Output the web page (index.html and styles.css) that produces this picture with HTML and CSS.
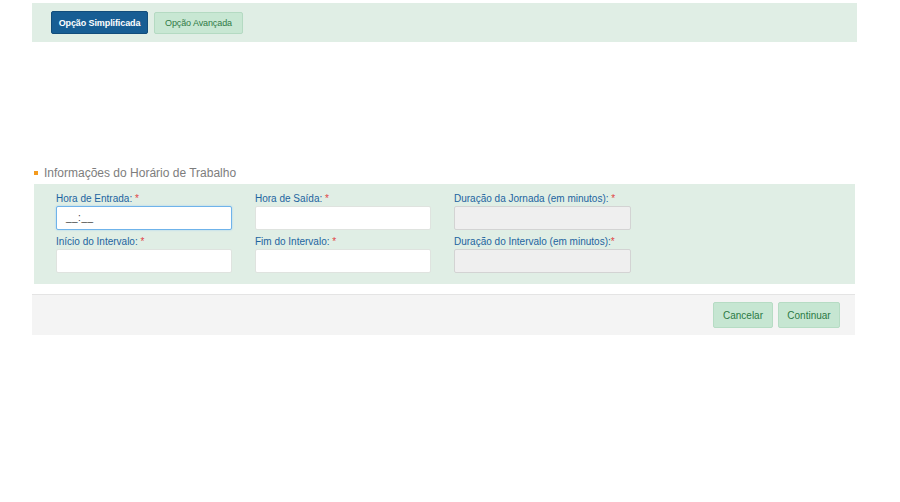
FILE: index.html
```html
<!DOCTYPE html>
<html lang="pt">
<head>
<meta charset="utf-8">
<link rel="stylesheet" href="styles.css">
</head>
<body>
<div class="page">
  <div class="tabs">
    <button class="tab tab-active">Opção Simplificada</button>
    <button class="tab tab-alt">Opção Avançada</button>
  </div>

  <div class="section-title"><span class="bullet"></span>Informações do Horário de Trabalho</div>

  <div class="panel">
    <div class="grid">
      <div class="field">
        <label>Hora de Entrada: <span class="req">*</span></label>
        <div class="input focused"><span class="mask">__:__</span></div>
      </div>
      <div class="field">
        <label>Hora de Saída: <span class="req">*</span></label>
        <div class="input"></div>
      </div>
      <div class="field">
        <label>Duração da Jornada (em minutos): <span class="req">*</span></label>
        <div class="input disabled"></div>
      </div>
      <div class="field">
        <label>Início do Intervalo: <span class="req">*</span></label>
        <div class="input"></div>
      </div>
      <div class="field">
        <label>Fim do Intervalo: <span class="req">*</span></label>
        <div class="input"></div>
      </div>
      <div class="field">
        <label>Duração do Intervalo (em minutos):<span class="req">*</span></label>
        <div class="input disabled"></div>
      </div>
    </div>
  </div>

  <div class="footer">
    <button class="btn btn-cancel">Cancelar</button>
    <button class="btn btn-continue">Continuar</button>
  </div>
</div>
</body>
</html>
```

FILE: styles.css
```css
* { box-sizing: border-box; }
html, body { margin: 0; padding: 0; background: #fff; }
body { font-family: "Liberation Sans", Arial, sans-serif; }

.page {
  width: 825px;
  margin-left: 32px;
  padding-top: 3px;
}

.tabs {
  background: #e0eee5;
  height: 39px;
  display: flex;
  align-items: center;
  gap: 6px;
  padding-left: 19px;
}

.tab {
  font-family: "Liberation Sans", Arial, sans-serif;
  font-size: 9px;
  height: 23px;
  border-radius: 2px;
  padding: 0;
  white-space: nowrap;
  cursor: pointer;
  letter-spacing: -0.1px;
}
.tab-active {
  background: #175e94;
  border: 1px solid #124d7b;
  color: #fff;
  font-weight: bold;
  width: 97px;
}
.tab-alt {
  background: #c8e7d3;
  border: 1px solid #b4dac2;
  color: #2f7a45;
  width: 89px;
  height: 22px;
}

.section-title {
  margin-top: 123px;
  margin-left: 2px;
  height: 19px;
  padding-bottom: 3px;
  display: flex;
  align-items: center;
  font-size: 12px;
  color: #7d7d7d;
}
.bullet {
  width: 4px;
  height: 4px;
  background: #f39a1e;
  margin-right: 6px;
}

.panel {
  margin-left: 2px;
  width: 821px;
  background: #e0eee5;
  padding: 9px 0 10px 22px;
  height: 100px;
}

.grid {
  display: grid;
  grid-template-columns: 176px 176px 177px;
  column-gap: 23px;
  row-gap: 0;
}

.field { display: flex; flex-direction: column; }

.field label {
  font-size: 10px;
  color: #1d64a0;
  height: 13px;
  line-height: 12px;
}
.req { color: #e04646; }

.input {
  height: 24px;
  background: #fff;
  border: 1px solid #dfe3df;
  border-radius: 2px;
  margin-bottom: 6px;
  position: relative;
}
.input.focused {
  border: 1px solid #6fb3ea;
  box-shadow: 0 0 2px #9cccf2;
}
.input.disabled {
  background: #efefef;
  border-color: #d3d3d3;
}
.mask {
  position: absolute;
  left: 9px;
  top: 5px;
  font-size: 10px;
  color: #444;
  letter-spacing: 0.5px;
}

.footer {
  margin-top: 10px;
  width: 823px;
  height: 41px;
  background: #f4f4f4;
  border-top: 1px solid #e4e4e4;
  display: flex;
  justify-content: flex-end;
  align-items: center;
  gap: 5px;
  padding-right: 15px;
}

.btn {
  font-family: "Liberation Sans", Arial, sans-serif;
  font-size: 10px;
  height: 26px;
  background: #c6e6d2;
  border: 1px solid #b6dcc4;
  border-radius: 2px;
  color: #2b7a44;
  padding: 0;
  white-space: nowrap;
  cursor: pointer;
}
.btn-cancel { width: 60px; }
.btn-continue { width: 62px; }
```
